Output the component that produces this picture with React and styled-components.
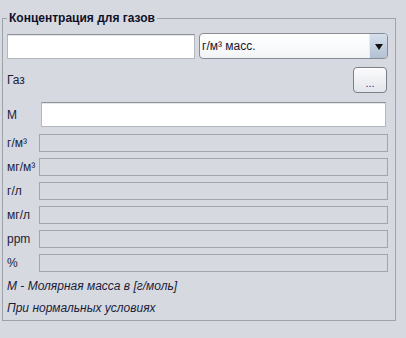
import React from 'react';
import styled, { createGlobalStyle } from 'styled-components';

const GlobalStyle = createGlobalStyle`
  html, body {
    margin: 0;
    padding: 0;
    background: #d6d9e0;
  }
  body {
    width: 406px;
    height: 338px;
    overflow: hidden;
    font-family: "Liberation Sans", Arial, sans-serif;
    font-size: 12px;
    color: #1c1c3a;
  }
`;

const Group = styled.fieldset`
  box-sizing: border-box;
  width: 394px;
  height: 310px;
  margin: 11px 0 0 2px;
  padding: 7px 6px 0 4px;
  border: 1px solid #9ea2a9;
  display: flex;
  flex-direction: column;
  min-width: 0;
`;

const Legend = styled.legend`
  padding: 0 2px;
  font-weight: bold;
  font-size: 12px;
  line-height: 15px;
  color: #10102a;
`;

const Row = styled.div`
  display: flex;
  align-items: center;
  justify-content: ${p => (p.$spread ? 'space-between' : 'flex-start')};
  gap: ${p => p.$gap || 0}px;
  margin-top: ${p => p.$top || 0}px;
  height: ${p => p.$h || 18}px;
`;

const TextInput = styled.input`
  box-sizing: border-box;
  width: ${p => p.$w}px;
  height: 25px;
  margin: 0;
  padding: 0 3px;
  border: 1px solid #b4b7bc;
  border-top-color: #8f9298;
  box-shadow: inset 0 1px 0 #e6e6e6;
  background: #fff;
  font: inherit;
  outline: none;
`;

const Select = styled.div`
  box-sizing: border-box;
  width: 189px;
  height: 26px;
  display: flex;
  border: 1px solid #868c96;
  border-radius: 4px;
  background: linear-gradient(#ffffff, #f3f4f6);
  overflow: hidden;
`;

const SelectValue = styled.div`
  flex: 1;
  display: flex;
  align-items: center;
  padding-left: 2px;
  font-size: 12px;
  color: #15152e;
`;

const SelectArrow = styled.div`
  width: 17px;
  display: flex;
  align-items: center;
  justify-content: center;
  border-left: 1px solid #e8ecf2;
  background: linear-gradient(#d6dfeb, #b3c1d3);
`;

const Triangle = styled.span`
  width: 0;
  height: 0;
  border-left: 4px solid transparent;
  border-right: 4px solid transparent;
  border-top: 6px solid #111;
  margin-top: 1px;
`;

const Label = styled.span`
  width: ${p => p.$w || 'auto'};
  flex-shrink: 0;
  font-size: 12px;
  color: #1c1c3a;
`;

const DotsButton = styled.button`
  box-sizing: border-box;
  width: 34px;
  height: 26px;
  margin: 0 2px 0 0;
  padding: 0 0 3px;
  border: 1px solid #7b7f87;
  border-radius: 4px;
  background: linear-gradient(#fbfbfc, #e2e5ea);
  box-shadow: inset 0 1px 0 #fff;
  font-family: inherit;
  font-size: 11px;
  color: #2a2a7a;
  display: flex;
  align-items: flex-end;
  justify-content: center;
`;

const Field = styled.div`
  box-sizing: border-box;
  width: 349px;
  height: 18px;
  border: 1px solid #a2a5aa;
  background: #d6d9e0;
`;

const Note = styled.div`
  font-style: italic;
  font-size: 12px;
  line-height: 22px;
  color: #1c1c3a;
  margin-top: ${p => p.$top || 0}px;
`;

const units = ['г/м³', 'мг/м³', 'г/л', 'мг/л', 'ppm', '%'];

const App = () => (
  <>
    <GlobalStyle />
    <Group>
      <Legend>Концентрация для газов</Legend>
      <Row $h={26} $gap={4}>
        <TextInput $w={188} />
        <Select>
          <SelectValue>г/м³ масс.</SelectValue>
          <SelectArrow>
            <Triangle />
          </SelectArrow>
        </Select>
      </Row>
      <Row $h={26} $top={8} $spread>
        <Label>Газ</Label>
        <DotsButton>...</DotsButton>
      </Row>
      <Row $h={25} $top={9}>
        <Label $w="34px">M</Label>
        <TextInput $w={345} />
      </Row>
      {units.map((u, i) => (
        <Row key={u} $top={i === 0 ? 7 : 6}>
          <Label $w="32px">{u}</Label>
          <Field />
        </Row>
      ))}
      <Note $top={3}>M - Молярная масса в [г/моль]</Note>
      <Note>При нормальных условиях</Note>
    </Group>
  </>
);

export default App;
